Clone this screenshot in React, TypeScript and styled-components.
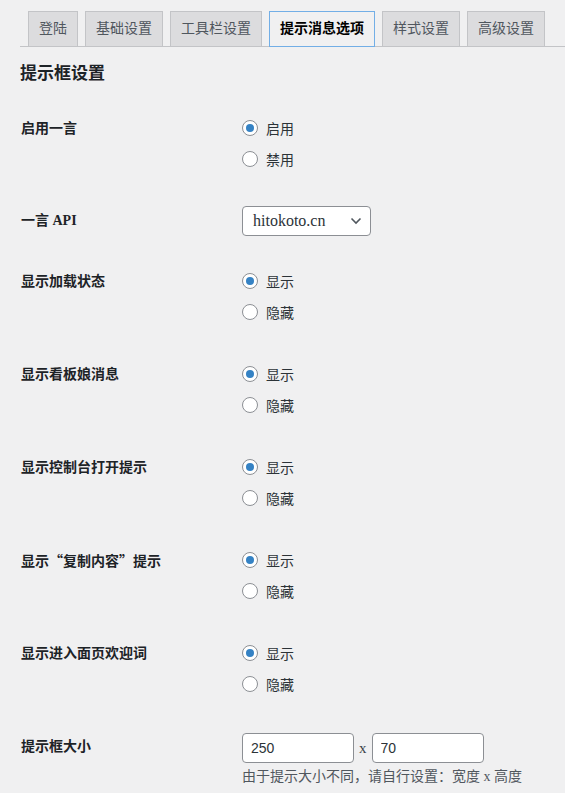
import React from 'react'
import styled, { createGlobalStyle } from 'styled-components'

const GlobalStyle = createGlobalStyle`
  body {
    margin: 0;
    background: #f0f0f1;
    color: #1d2327;
    font-family: 'Liberation Serif', 'Noto Sans CJK SC', serif;
    font-size: 14px;
  }
`

const Cjk = styled.span`
  font-family: 'Noto Sans CJK SC', sans-serif;
`

const tabs = ['登陆', '基础设置', '工具栏设置', '提示消息选项', '样式设置', '高级设置']

const toggles: { key: string; label: React.ReactNode }[] = [
  { key: 'loading', label: '显示加载状态' },
  { key: 'message', label: '显示看板娘消息' },
  { key: 'console', label: '显示控制台打开提示' },
  {
    key: 'copy',
    label: (
      <>
        显示<Cjk>“</Cjk>复制内容<Cjk>”</Cjk>提示
      </>
    ),
  },
  { key: 'welcome', label: '显示进入面页欢迎词' },
]

export default function App() {
  return (
    <>
      <GlobalStyle />
      <Page>
        <TabBar>
          {tabs.map((t) => (
            <Tab key={t} $active={t === '提示消息选项'}>
              {t}
            </Tab>
          ))}
        </TabBar>
        <Heading>提示框设置</Heading>
        <Form>
          <RadioRow name="hitokoto" label="启用一言" options={['启用', '禁用']} />
          <Row $pad={16} $padBottom={14}>
            <Label $lh={30} $pad={0}>
              一言 API
            </Label>
            <Cell>
              <SelectBox>
                <span>hitokoto.cn</span>
                <Chevron />
              </SelectBox>
            </Cell>
          </Row>
          {toggles.map((t) => (
            <RadioRow
              key={t.key}
              name={t.key}
              label={t.label}
              options={['显示', '隐藏']}
            />
          ))}
          <Row $pad={0} $padBottom={10}>
            <Label $lh={31.5} $pad={16}>
              提示框大小
            </Label>
            <Cell $pad={18}>
              <SizeInputs>
                <TextInput defaultValue="250" />
                <Times>x</Times>
                <TextInput defaultValue="70" />
              </SizeInputs>
              <Help>由于提示大小不同，请自行设置：宽度 x 高度</Help>
            </Cell>
          </Row>
        </Form>
      </Page>
    </>
  )
}

type RadioRowProps = {
  name: string
  label: React.ReactNode
  options: string[]
}

const RadioRow = ({ name, label, options }: RadioRowProps) => {
  return (
    <Row $pad={15} $padBottom={15}>
      <Label $lh={31.5} $pad={1}>
        {label}
      </Label>
      <Cell>
        {options.map((o, i) => (
          <RadioItem key={o}>
            <Radio type="radio" name={name} defaultChecked={i === 0} />
            {o}
          </RadioItem>
        ))}
      </Cell>
    </Row>
  )
}

const Chevron = () => (
  <svg width="12" height="8" viewBox="0 0 12 8">
    <polyline
      points="1.5,1.5 6,6 10.5,1.5"
      fill="none"
      stroke="#50575e"
      strokeWidth="1.6"
    />
  </svg>
)

const Page = styled.div`
  padding: 11px 0 0 20px;
`

const TabBar = styled.div`
  display: flex;
  gap: 7px;
  padding-left: 8px;
  border-bottom: 1px solid #c3c4c7;
`

const Tab = styled.div<{ $active?: boolean }>`
  padding: 5px 10px;
  margin-bottom: -1px;
  font-size: 14px;
  line-height: 24px;
  border: 1px solid ${(p) => (p.$active ? '#72aee6' : '#c3c4c7')};
  background: ${(p) => (p.$active ? '#f0f0f1' : '#dcdcde')};
  color: ${(p) => (p.$active ? '#000' : '#50575e')};
  font-weight: ${(p) => (p.$active ? 600 : 400)};
  white-space: nowrap;
`

const Heading = styled.h2`
  margin: 16px 0 0;
  font-size: 17px;
  line-height: 22px;
  font-weight: 600;
`

const Form = styled.div`
  margin-top: 12px;
`

const Row = styled.div<{ $pad: number; $padBottom: number }>`
  display: grid;
  grid-template-columns: 222px 1fr;
  padding: ${(p) => p.$pad}px 0 ${(p) => p.$padBottom}px;
`

const Label = styled.div<{ $lh: number; $pad: number }>`
  font-weight: 600;
  font-size: 14px;
  line-height: ${(p) => p.$lh}px;
  padding-top: ${(p) => p.$pad}px;
  padding-left: 1px;
  color: #1d2327;
`

const Cell = styled.div<{ $pad?: number }>`
  display: flex;
  flex-direction: column;
  padding-top: ${(p) => p.$pad || 0}px;
`

const RadioItem = styled.label`
  display: flex;
  align-items: center;
  gap: 8px;
  height: 31.5px;
  color: #2c3338;
  font-size: 14px;
`

const Radio = styled.input`
  appearance: none;
  margin: 0;
  width: 16px;
  height: 16px;
  border: 1px solid #8c8f94;
  border-radius: 50%;
  background: #fff;
  display: grid;
  place-items: center;
  box-sizing: border-box;

  &:checked::before {
    content: '';
    width: 8px;
    height: 8px;
    border-radius: 50%;
    background: #3582c4;
  }
`

const SelectBox = styled.div`
  width: 129px;
  height: 30px;
  box-sizing: border-box;
  border: 1px solid #8c8f94;
  border-radius: 4px;
  background: #fff;
  display: flex;
  align-items: center;
  justify-content: space-between;
  padding: 0 8px 0 10px;
  font-size: 16px;
  color: #2c3338;
`

const SizeInputs = styled.div`
  display: flex;
  align-items: center;
  gap: 5px;
`

const TextInput = styled.input`
  width: 112px;
  height: 30px;
  box-sizing: border-box;
  border: 1px solid #8c8f94;
  border-radius: 4px;
  background: #fff;
  padding: 0 8px;
  font-family: 'Liberation Sans', sans-serif;
  font-size: 14px;
  color: #2c3338;
  outline: none;
`

const Times = styled.span`
  font-size: 15px;
  color: #3c434a;
`

const Help = styled.p`
  margin: 4px 0 0;
  line-height: 20px;
  font-size: 14px;
  color: #50575e;
`
